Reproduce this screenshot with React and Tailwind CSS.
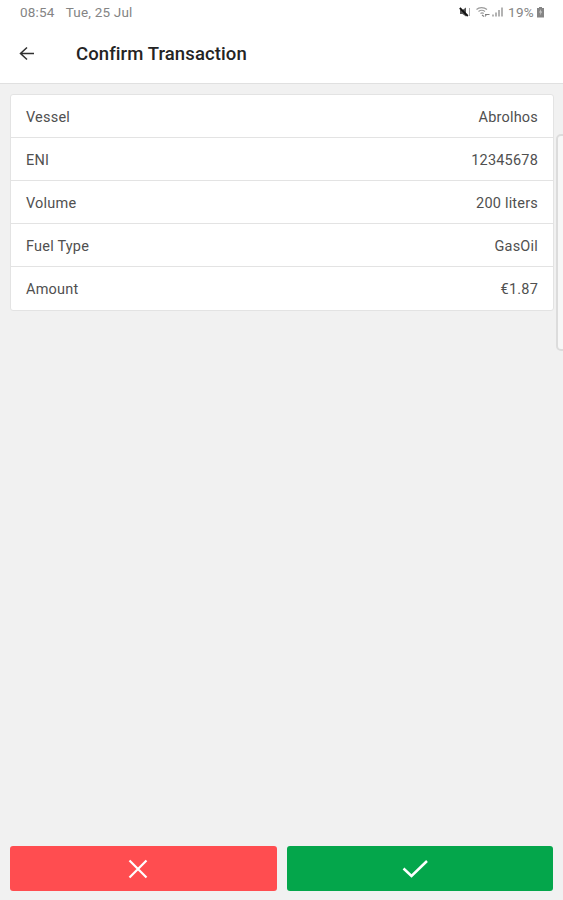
import React from 'react';

const details = [
    { label: 'Vessel', value: 'Abrolhos' },
    { label: 'ENI', value: '12345678' },
    { label: 'Volume', value: '200 liters' },
    { label: 'Fuel Type', value: 'GasOil' },
    { label: 'Amount', value: '€1.87' },
];

function StatusBar() {
    return (
        <div className="flex h-6 items-center justify-between pl-5 pr-[18px] text-[13.5px] text-[#848484]">
            <div className="flex gap-[11px]">
                <span className="tracking-[0.2px]">08:54</span>
                <span className="tracking-[0.2px]">Tue, 25 Jul</span>
            </div>
            <div className="flex items-center">
                {/* Muted speaker */}
                <svg className="mr-[5px] h-3 w-3" viewBox="0 0 12 12" fill="none">
                    <path d="M1 4h2.500l3.500-2.500v9L3.500 8H1z" fill="#555" />
                    <path d="M0.800 2l8 8" stroke="#111" strokeWidth="1.8" />
                    <path d="M10.500 2v8" stroke="#aaa" strokeWidth="1" />
                </svg>
                {/* Wifi */}
                <svg className="mr-0.5 h-3 w-[14px]" viewBox="0 0 14 12" fill="none" stroke="#9a9a9a" strokeWidth="1.1">
                    <path d="M0.500 3.500C3 1 8 1 11 3.500M2.500 5.500C4.500 4 7 4 9 5.500M4.500 7.500c1-0.800 2.200-0.800 3.200 0" />
                    <path d="M6 9l2 1.500M9 8.500h4.500M9 10.500l1.500-2" stroke="#808080" />
                </svg>
                {/* Signal */}
                <svg className="mr-[5px] h-3 w-[11px]" viewBox="0 0 11 12" fill="none" stroke="#9a9a9a" strokeWidth="1.5">
                    <path d="M1 8.500v2M4 6.500v4M7 4v6.500M10 1.500v9" />
                </svg>
                <span className="tracking-[0.3px]">19%</span>
                {/* Battery */}
                <svg className="ml-0.5 h-3 w-[9px]" viewBox="0 0 9 12">
                    <path d="M3 1h3v1h2v9.500H1V2h2z" fill="#858585" />
                    <path d="M5 3L3 6.500h1.500L4 9.500l2.200-4H4.800z" fill="#ccc" />
                </svg>
            </div>
        </div>
    );
}

function Header() {
    return (
        <div className="flex h-[59px] items-center pl-[19px]">
            <svg className="h-4 w-4" viewBox="0 0 16 16" fill="none" stroke="#303030" strokeWidth="1.5">
                <path d="M15 7.500H1.500M8 1.500L1.500 7.500L8 13.500" />
            </svg>
            <h1 className="ml-[41px] pt-0.5 text-[18.5px] font-medium tracking-[0.1px] text-[#242424]">Confirm Transaction</h1>
        </div>
    );
}

export default function App() {
    return (
        <div className="relative flex h-[900px] w-full flex-col overflow-hidden bg-[#f1f1f1] font-['Roboto',sans-serif]">
            <div className="border-b border-[#e0e0e0] bg-white">
                <StatusBar />
                <Header />
            </div>

            {/* Transaction details */}
            <dl className="ml-2.5 mr-[9px] mt-2.5 rounded-[3px] border border-[#e3e3e3] bg-white text-[14.5px] tracking-[0.2px] text-[#505050]">
                {details.map((item) => (
                    <div
                        key={item.label}
                        className="flex h-[43px] items-center justify-between border-b border-[#e3e3e3] px-[15px] pt-[3px] last:border-b-0"
                    >
                        <dt>{item.label}</dt>
                        <dd>{item.value}</dd>
                    </div>
                ))}
            </dl>

            {/* Edge panel handle */}
            <div className="absolute top-[134px] -right-1 h-[217px] w-[11px] rounded-[5px] border-2 border-[#dcdcdc] bg-[#f7f7f7]"></div>

            <div className="mt-auto mb-[9px] flex gap-2.5 px-2.5">
                <button type="button" aria-label="Cancel" className="flex h-[45px] flex-1 items-center justify-center rounded-[3px] bg-[#ff4d50] pr-2.5">
                    <svg className="h-5 w-5" viewBox="0 0 20 20" fill="none" stroke="#fff" strokeWidth="2.2">
                        <path d="M1.500 1.500l17 17M18.500 1.500l-17 17" />
                    </svg>
                </button>
                <button type="button" aria-label="Confirm" className="flex h-[45px] flex-1 items-center justify-center rounded-[3px] bg-[#04a64b] pr-2.5">
                    <svg className="h-5 w-[26px]" viewBox="0 0 26 20" fill="none" stroke="#fff" strokeWidth="2.5">
                        <path d="M1.500 9.500l8 7.500L25 2" />
                    </svg>
                </button>
            </div>
        </div>
    );
}
